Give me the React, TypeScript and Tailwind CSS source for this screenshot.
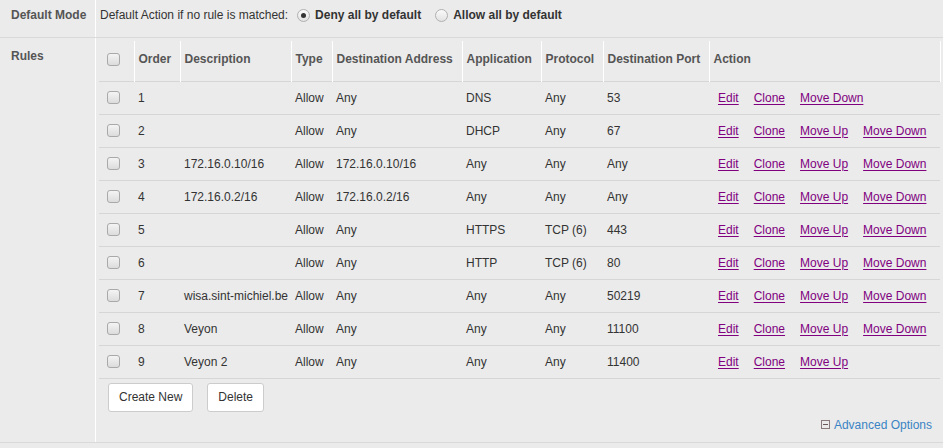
import React from "react";

type Row = {
  order: number;
  desc: string;
  type: string;
  dest: string;
  app: string;
  proto: string;
  port: string;
  up: boolean;
  down: boolean;
};

const rows: Row[] = [
  { order: 1, desc: "", type: "Allow", dest: "Any", app: "DNS", proto: "Any", port: "53", up: false, down: true },
  { order: 2, desc: "", type: "Allow", dest: "Any", app: "DHCP", proto: "Any", port: "67", up: true, down: true },
  { order: 3, desc: "172.16.0.10/16", type: "Allow", dest: "172.16.0.10/16", app: "Any", proto: "Any", port: "Any", up: true, down: true },
  { order: 4, desc: "172.16.0.2/16", type: "Allow", dest: "172.16.0.2/16", app: "Any", proto: "Any", port: "Any", up: true, down: true },
  { order: 5, desc: "", type: "Allow", dest: "Any", app: "HTTPS", proto: "TCP (6)", port: "443", up: true, down: true },
  { order: 6, desc: "", type: "Allow", dest: "Any", app: "HTTP", proto: "TCP (6)", port: "80", up: true, down: true },
  { order: 7, desc: "wisa.sint-michiel.be", type: "Allow", dest: "Any", app: "Any", proto: "Any", port: "50219", up: true, down: true },
  { order: 8, desc: "Veyon", type: "Allow", dest: "Any", app: "Any", proto: "Any", port: "11100", up: true, down: true },
  { order: 9, desc: "Veyon 2", type: "Allow", dest: "Any", app: "Any", proto: "Any", port: "11400", up: true, down: false },
];

function Check() {
  return (
    <span className="inline-block w-[13px] h-[13px] rounded-[3px] border border-[#a9a9a9] bg-gradient-to-b from-[#f4f4f4] to-[#dcdcdc] align-middle" />
  );
}

function Radio({ on }: { on: boolean }) {
  return (
    <span className="inline-flex items-center justify-center w-[13px] h-[13px] rounded-full border border-[#b0b0b0] bg-gradient-to-b from-[#fafafa] to-[#e2e2e2]">
      {on && <span className="w-[5px] h-[5px] rounded-full bg-[#333]" />}
    </span>
  );
}

function Lnk({ children }: { children: React.ReactNode }) {
  return <a className="text-[#800080] underline underline-offset-[2px] cursor-pointer">{children}</a>;
}

const widths = ["w-[35px]", "w-[46px]", "w-[111px]", "w-[41px]", "w-[130px]", "w-[79px]", "w-[62px]", "w-[106px]", "w-[231px]"];
const headers = ["", "Order", "Description", "Type", "Destination Address", "Application", "Protocol", "Destination Port", "Action"];

export default function App() {
  return (
    <div
      className="w-[943px] h-[448px] bg-[#ebebeb] text-[12px] text-[#333] overflow-hidden"
      style={{ fontFamily: '"Liberation Sans", Arial, sans-serif' }}
    >
      {/* Default Mode */}
      <div className="flex border-b border-[#d9d9d9] h-[38px]">
        <div className="w-[96px] border-r border-white shrink-0 pl-[11px] pt-[6px] font-bold text-[#555]">
          Default Mode
        </div>
        <div className="flex items-start pl-[4px] pt-[6px]">
          <span>Default Action if no rule is matched:</span>
          <label className="flex items-center ml-[9px] gap-[5px] font-bold">
            <Radio on />
            <span>Deny all by default</span>
          </label>
          <label className="flex items-center ml-[14px] gap-[5px] font-bold">
            <Radio on={false} />
            <span>Allow all by default</span>
          </label>
        </div>
      </div>

      {/* Rules */}
      <div className="flex h-[405px] border-b border-[#d9d9d9]">
        <div className="w-[96px] border-r border-white shrink-0 pl-[11px] pt-[9px] font-bold text-[#555]">Rules</div>
        <div className="flex-1 pl-[3px] pt-[3px] pr-[2px]">
          <table className="border-collapse table-fixed w-[841px]">
            <thead>
              <tr className="h-[40px] border-b border-[#d6d6d6]">
                {headers.map((h, i) => (
                  <th
                    key={i}
                    className={`${widths[i]} text-left font-bold text-[#555] px-[4px] pb-[3px] align-middle ${
                      i > 0 ? "border-l border-white" : ""
                    } ${i === 8 ? "border-r border-white" : ""}`}
                  >
                    {i === 0 ? (
                      <span className="pl-[4px] flex">
                        <Check />
                      </span>
                    ) : (
                      h
                    )}
                  </th>
                ))}
              </tr>
            </thead>
            <tbody>
              {rows.map((r) => (
                <tr key={r.order} className="h-[33px] border-b border-[#d6d6d6]">
                  <td className="px-[4px]">
                    <span className="pl-[4px] flex">
                      <Check />
                    </span>
                  </td>
                  <td className="px-[4px]">{r.order}</td>
                  <td className="px-[4px] whitespace-nowrap">{r.desc}</td>
                  <td className="px-[4px]">{r.type}</td>
                  <td className="px-[4px]">{r.dest}</td>
                  <td className="px-[4px]">{r.app}</td>
                  <td className="px-[4px]">{r.proto}</td>
                  <td className="px-[4px]">{r.port}</td>
                  <td className="px-[4px] pl-[9px]">
                    <div className="flex gap-[15px]">
                      <Lnk>Edit</Lnk>
                      <Lnk>Clone</Lnk>
                      {r.up && <Lnk>Move Up</Lnk>}
                      {r.down && <Lnk>Move Down</Lnk>}
                    </div>
                  </td>
                </tr>
              ))}
            </tbody>
          </table>
          <div className="flex gap-[14px] pl-[9px] pt-[4px]">
            <button className="h-[29px] px-[10px] bg-white border border-[#ccc] rounded-[3px] text-[#333]">Create New</button>
            <button className="h-[29px] px-[10px] bg-white border border-[#ccc] rounded-[3px] text-[#333]">Delete</button>
          </div>
          <div className="flex justify-end items-center pr-[9px] mt-[4px] gap-[4px]">
            <span className="w-[9px] h-[9px] border border-[#8a7a7a] flex items-center justify-center">
              <span className="w-[5px] h-px bg-[#6a5a5a]" />
            </span>
            <span className="text-[#3a84c4]">Advanced Options</span>
          </div>
        </div>
      </div>
    </div>
  );
}
